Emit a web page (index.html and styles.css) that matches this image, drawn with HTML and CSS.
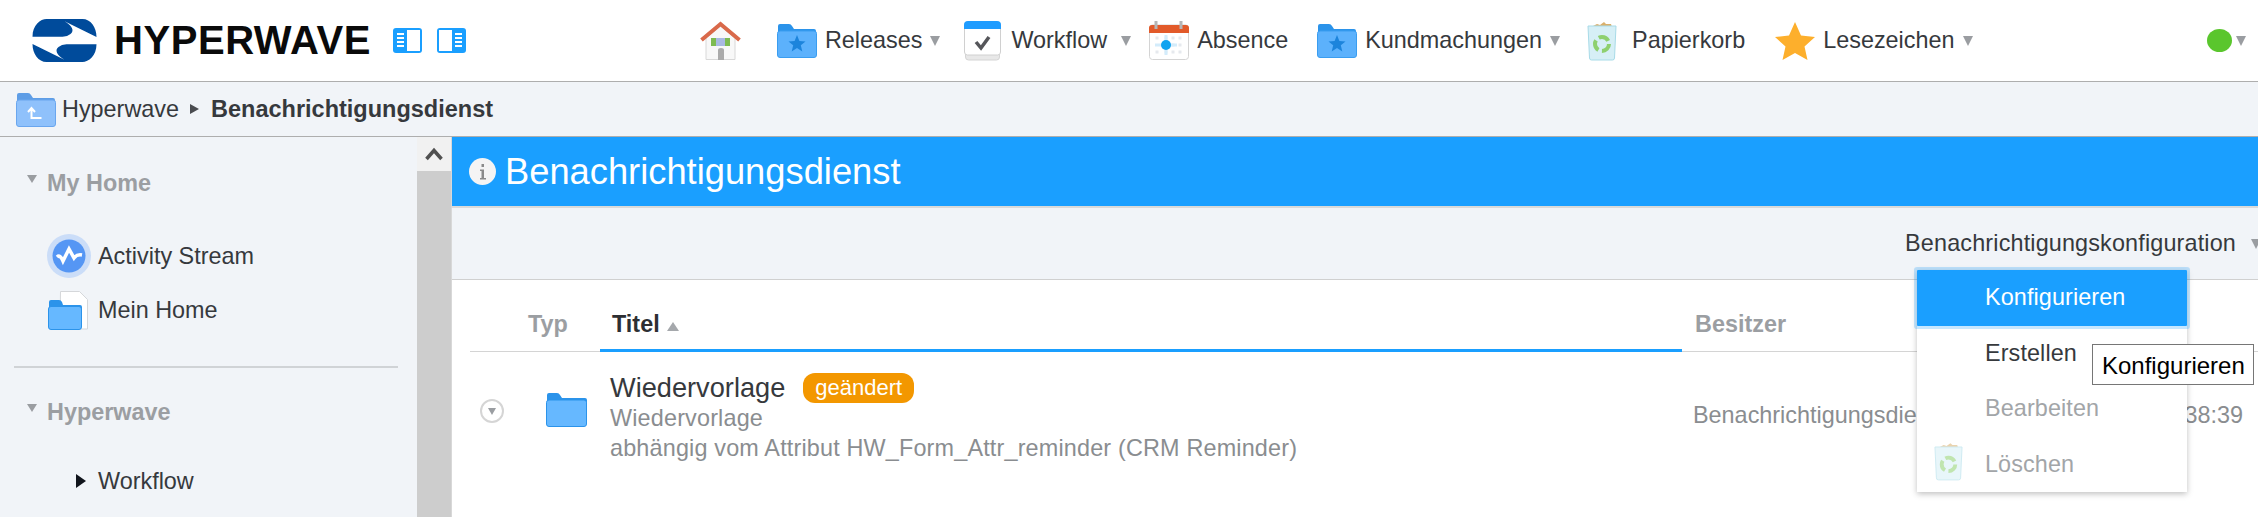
FILE: index.html
```html
<!DOCTYPE html>
<html lang="en">
<head>
    <meta charset="UTF-8">
    <meta name="viewport" content="width=device-width, initial-scale=1.0">
    <title>Hyperwave - Benachrichtigungsdienst</title>
    <link rel="stylesheet" href="styles.css">
</head>
<body>

    <svg class="defs" width="0" height="0">
        <symbol id="folder-star" viewBox="0 0 40 35">
            <path d="M1 7V3q0-2 2-2h9q2 0 3 2l2 3h20q2 0 2 2v4H1z" fill="#2b93ea"/>
            <rect x="0.5" y="8" width="39" height="26.5" rx="2.5" fill="#5cb1fc" stroke="#3a9df0"/>
            <polygon points="20,12 22.4,18 28.5,18.4 23.8,22.3 25.3,28.5 20,25.1 14.7,28.5 16.2,22.3 11.5,18.4 17.6,18" fill="#1c84dc"/>
        </symbol>
        <symbol id="folder-plain" viewBox="0 0 41 35">
            <path d="M1 7V3q0-2 2-2h8q2 0 3 2l2 3h23q2 0 2 2v4H1z" fill="#2b93ea"/>
            <rect x="0.5" y="8" width="40" height="26.5" rx="2.5" fill="#66b8ff" stroke="#2b93ea"/>
        </symbol>
        <symbol id="recycle" viewBox="0 0 30 40">
            <path d="M6 5l4-2 3 1 4-3 2 2 5 0 1 3H6z" fill="#d9b06c"/>
            <path d="M1 5h28l-1.500 32q0 2-2 2h-21q-2 0-2-2z" fill="#d6eff6" stroke="#a8dbe8"/>
            <circle cx="15" cy="23" r="7" fill="none" stroke="#8ed06f" stroke-width="4" stroke-dasharray="11 3.700"/>
        </symbol>
    </svg>

    <header class="topbar">
        <svg class="logo" width="65" height="43" viewBox="0 0 64 43">
            <path d="M0 17.700C0 6 8 0 14 0H50C58 0 64 8 64 18L32 2.300C40 7 42 12 38 15Q35 17.700 30 17.700Z" fill="#004b9b"/>
            <path d="M64 25.300C64 37 56 43 50 43H14C6 43 0 35 0 25L32 40.700C24 36 22 31 26 28Q29 25.300 34 25.300Z" fill="#004b9b"/>
        </svg>
        <span class="brand">HYPERWAVE</span>
        <svg class="panel-icon panel-left" width="29" height="25" viewBox="0 0 29 25">
            <rect width="29" height="25" rx="3" fill="#1a9fff"/>
            <rect x="14" y="2" width="13" height="21" fill="#fff"/>
            <path d="M4 6h7M4 10h7M4 14h7M4 18h7" stroke="#fff" stroke-width="2"/>
        </svg>
        <svg class="panel-icon panel-right" width="29" height="25" viewBox="0 0 29 25">
            <rect width="29" height="25" rx="3" fill="#1a9fff"/>
            <rect x="2" y="2" width="13" height="21" fill="#fff"/>
            <path d="M18 6h7M18 10h7M18 14h7M18 18h7" stroke="#fff" stroke-width="2"/>
        </svg>

        <nav class="nav">
            <a class="nav-item nav-home">
                <svg width="43" height="39" viewBox="0 0 43 39">
                    <path d="M7 17L21.500 5 36 17V38.500H7z" fill="#f8f8f8" stroke="#d8d8d8"/>
                    <path d="M2.500 19L21.500 3 40.500 19" fill="none" stroke="#d9694a" stroke-width="4"/>
                    <rect x="12" y="17" width="19" height="8" fill="#7dbb52"/>
                    <rect x="17" y="17" width="9" height="8" fill="#a9b9e2"/>
                    <path d="M19 39V29q0-2 3-2t3 2v10z" fill="#aaa"/>
                </svg>
            </a>
            <a class="nav-item nav-releases">
                <svg width="40" height="35"><use href="#folder-star"/></svg>
                <span>Releases</span><i class="caret"></i>
            </a>
            <a class="nav-item nav-workflow">
                <svg width="37" height="40" viewBox="0 0 37 40">
                    <rect x="1.500" y="6" width="34" height="33" rx="3" fill="#e8e8e8" stroke="#d4d4d4"/>
                    <rect x="0.500" y="1" width="36" height="33" rx="3" fill="#fff" stroke="#d0d0d0"/>
                    <path d="M0 4q0-4 4-4h29q4 0 4 4v4H0z" fill="#1f9cff"/>
                    <path d="M12 21l5 6 8-11" fill="none" stroke="#55565a" stroke-width="3.500"/>
                </svg>
                <span>Workflow</span><i class="caret"></i>
            </a>
            <a class="nav-item nav-absence">
                <svg width="40" height="39" viewBox="0 0 40 39">
                    <rect x="0.500" y="4" width="39" height="34.500" rx="3" fill="#fff" stroke="#d4d4d4"/>
                    <path d="M0 7q0-3 3-3h34q3 0 3 3v5H0z" fill="#e25a2a"/>
                    <path d="M7 0v8M32 0v8" stroke="#b5b5b5" stroke-width="3"/>
                    <path d="M6.500 17h3M15.500 17h3M22.500 17h3M29.500 17h3M22.500 24h3M29.500 24h3M6.500 31h3M15.500 31h3M22.500 31h3M29.500 31h3" stroke="#e6e9ee" stroke-width="3"/>
                    <path d="M6 24h22M17 14v20" stroke="#d3ecfb" stroke-width="3"/>
                    <circle cx="17" cy="24" r="5" fill="#0fa3f0"/>
                </svg>
                <span>Absence</span>
            </a>
            <a class="nav-item nav-notices">
                <svg width="40" height="35"><use href="#folder-star"/></svg>
                <span>Kundmachungen</span><i class="caret"></i>
            </a>
            <a class="nav-item nav-trash">
                <svg width="30" height="40"><use href="#recycle"/></svg>
                <span>Papierkorb</span>
            </a>
            <a class="nav-item nav-bookmarks">
                <svg width="40" height="38" viewBox="0 0 40 38">
                    <polygon points="20,0 26,13.500 40,15 29.500,24.500 32.500,38 20,31 7.500,38 10.500,24.500 0,15 14,13.500" fill="#fdaf2c"/>
                </svg>
                <span>Lesezeichen</span><i class="caret"></i>
            </a>
            <a class="nav-item nav-status">
                <i class="status-dot"></i><i class="caret"></i>
            </a>
        </nav>
    </header>

    <div class="crumbs">
        <svg width="40" height="35" viewBox="0 0 40 35">
            <path d="M1 7V3q0-2 2-2h9q2 0 3 2l2 3h20q2 0 2 2v4H1z" fill="#5e9de6"/>
            <rect x="0.500" y="8" width="39" height="26.500" rx="2.500" fill="#8fc1fb" stroke="#6aa6ee"/>
            <path d="M12 20l3.500-4 3.500 4M15.500 16v10h10" fill="none" stroke="#fff" stroke-width="2"/>
        </svg>
        <span class="crumb">Hyperwave</span>
        <i class="crumb-sep"></i>
        <strong class="crumb-current">Benachrichtigungsdienst</strong>
    </div>

    <div class="content">
        <aside class="sidebar">
            <h3 class="side-title"><i class="caret"></i>My Home</h3>
            <ul class="side-list">
                <li>
                    <span class="side-icon">
                        <svg width="44" height="44" viewBox="0 0 44 44">
                            <circle cx="22" cy="22" r="22" fill="#cbddf8"/>
                            <circle cx="22" cy="22" r="16.500" fill="#5596f4"/>
                            <path d="M10 23Q13 20 16 27L22 15 27 24Q30 20 35 21" fill="none" stroke="#fff" stroke-width="3.500"/>
                        </svg>
                    </span>
                    Activity Stream
                </li>
                <li>
                    <span class="side-icon">
                        <svg width="42" height="39" viewBox="0 0 42 39">
                            <path d="M13.500 .5h19l8 8v29.500h-27.500z" fill="#fff" stroke="#d5d7da"/>
                            <path d="M2 18v-7q0-2 2-2h8q2 0 3 2l1 3h17q2 0 2 2v2H2z" fill="#2b93ea"/>
                            <rect x="1.500" y="15.500" width="33" height="23" rx="2.500" fill="#66b8ff" stroke="#2b93ea"/>
                        </svg>
                    </span>
                    Mein Home
                </li>
            </ul>
            <div class="side-divider"></div>
            <h3 class="side-title"><i class="caret"></i>Hyperwave</h3>
            <ul class="side-list side-list-tree">
                <li><span class="side-icon"><i class="tree-arrow"></i></span>Workflow</li>
            </ul>
        </aside>

        <div class="scrollbar">
            <div class="scroll-btn">
                <svg width="18" height="14" viewBox="0 0 18 14"><path d="M1.500 12L9 3.500 16.500 12" fill="none" stroke="#505050" stroke-width="3.500"/></svg>
            </div>
        </div>

        <main class="main">
            <div class="title-bar">
                <svg width="27" height="27" viewBox="0 0 27 27">
                    <circle cx="13.500" cy="13.500" r="13.500" fill="#f4f4f4"/>
                    <path d="M11 11.500h4V20h2v1.500h-6V20h1.500v-7H11zM12.500 6h2.500v3h-2.500z" fill="#8a8a8a"/>
                </svg>
                <h1>Benachrichtigungsdienst</h1>
            </div>
            <div class="toolbar">
                <span>Benachrichtigungskonfiguration</span><i class="caret"></i>
            </div>

            <div class="table-head">
                <div class="col-type">Typ</div>
                <div class="col-title">Titel<i class="sort-up"></i></div>
                <div class="col-owner">Besitzer</div>
            </div>
            <div class="table-row">
                <div class="col-type">
                    <svg class="row-toggle" width="24" height="24" viewBox="0 0 24 24">
                        <circle cx="12" cy="12" r="11" fill="#fff" stroke="#d5d5d5" stroke-width="2"/>
                        <polygon points="8,9 16,9 12,16" fill="#9a9da1"/>
                    </svg>
                    <svg class="row-folder" width="41" height="35"><use href="#folder-plain"/></svg>
                </div>
                <div class="col-title">
                    <div class="row-name">Wiedervorlage <span class="badge">geändert</span></div>
                    <div class="row-sub">Wiedervorlage</div>
                    <div class="row-sub">abhängig vom Attribut HW_Form_Attr_reminder (CRM Reminder)</div>
                </div>
                <div class="col-owner">
                    <span>Benachrichtigungsdienst</span>
                    <span>38:39</span>
                </div>
            </div>

            <div class="menu">
                <div class="menu-item menu-active"><span class="menu-slot"></span>Konfigurieren</div>
                <div class="menu-item"><span class="menu-slot"></span>Erstellen</div>
                <div class="menu-item menu-disabled"><span class="menu-slot"></span>Bearbeiten</div>
                <div class="menu-item menu-disabled">
                    <span class="menu-slot"><svg width="29" height="39"><use href="#recycle"/></svg></span>Löschen
                </div>
            </div>
            <div class="tooltip">Konfigurieren</div>
        </main>
    </div>

</body>
</html>
```

FILE: styles.css
```css
/* Global Styles */
* {
    box-sizing: border-box;
}

body {
    font-family: "Liberation Sans", Arial, sans-serif;
    font-size: 23.4px;
    color: #36393d;
    margin: 0;
    width: 100vw;
    height: 100vh;
    display: flex;
    flex-direction: column;
    overflow: hidden;
    background-color: #fff;
}

.defs {
    position: absolute;
}

.caret {
    display: block;
    flex-shrink: 0;
    width: 0;
    height: 0;
    border-left: 5.5px solid transparent;
    border-right: 5.5px solid transparent;
    border-top: 10px solid #9a9da1;
}

/* Top Bar */
.topbar {
    height: 82px;
    flex-shrink: 0;
    display: flex;
    align-items: center;
    padding-left: 32px;
    border-bottom: 1px solid #aeaeae;
}

.logo {
    flex-shrink: 0;
}

.brand {
    margin-left: 17px;
    font-size: 40px;
    font-weight: bold;
    letter-spacing: 0.55px;
    color: #0a0a0a;
}

.panel-left { margin-left: 22px; }
.panel-right { margin-left: 15px; }

.nav {
    display: flex;
    align-items: center;
    margin-left: 233px;
}

.nav-item {
    display: flex;
    align-items: center;
    gap: 8px;
    white-space: nowrap;
}

.nav-releases { margin-left: 35px; }
.nav-workflow { margin-left: 24px; gap: 10px; }
.nav-workflow .caret { margin-left: 4px; }
.nav-absence { margin-left: 18px; }
.nav-notices { margin-left: 29px; }
.nav-trash { margin-left: 27px; gap: 15px; }
.nav-bookmarks { margin-left: 30px; }
.nav-status { margin-left: 234px; gap: 4px; }

.status-dot {
    display: block;
    width: 25px;
    height: 23px;
    border-radius: 50%;
    background-color: #5ac62d;
}

/* Breadcrumb */
.crumbs {
    height: 55px;
    flex-shrink: 0;
    display: flex;
    align-items: center;
    padding-left: 16px;
    background-color: #f1f4f8;
    border-bottom: 1px solid #aeaeae;
}

.crumb {
    margin-left: 6px;
}

.crumb-sep {
    margin: 0 12px 0 11px;
    border-top: 5.5px solid transparent;
    border-bottom: 5.5px solid transparent;
    border-left: 9px solid #4a4c50;
}

.crumb-current {
    font-size: 23.5px;
}

/* Content */
.content {
    flex: 1;
    display: flex;
    min-height: 0;
}

/* Sidebar */
.sidebar {
    width: 417px;
    flex-shrink: 0;
    padding-top: 32px;
    background-color: #f1f4f8;
}

.side-title {
    display: flex;
    align-items: center;
    gap: 10px;
    margin: 0 0 0 27px;
    height: 28px;
    font-size: 23.4px;
    color: #9b9ea2;
}

.side-title .caret {
    margin-top: -8px;
    border-top-width: 8px;
}

.side-list {
    list-style: none;
    margin: 32px 0 0;
    padding: 0 0 0 47px;
}

.side-list-tree {
    margin-top: 28px;
}

.side-list li {
    height: 54px;
    display: flex;
    align-items: center;
    gap: 7px;
}

.side-icon {
    width: 44px;
    display: flex;
    justify-content: flex-start;
}

.tree-arrow {
    margin-left: auto;
    margin-right: 5px;
    border-top: 7px solid transparent;
    border-bottom: 7px solid transparent;
    border-left: 10px solid #10141c;
}

.side-divider {
    height: 2px;
    margin: 29px 19px 30px 14px;
    background-color: #d0d3d6;
}

/* Scrollbar */
.scrollbar {
    width: 34px;
    flex-shrink: 0;
    background-color: #cdcdcd;
}

.scroll-btn {
    height: 34px;
    display: flex;
    align-items: center;
    justify-content: center;
    background-color: #f1f1f1;
}

/* Main */
.main {
    flex: 1;
    position: relative;
    overflow: hidden;
    border-left: 1px solid #d8d8d8;
}

.title-bar {
    height: 69px;
    display: flex;
    align-items: center;
    gap: 9px;
    padding-left: 17px;
    background-color: #1a9fff;
}

.title-bar h1 {
    margin: 0;
    font-size: 36.3px;
    font-weight: normal;
    color: #fff;
}

.toolbar {
    height: 74px;
    display: flex;
    align-items: center;
    justify-content: flex-end;
    gap: 15px;
    margin-right: -3px;
    letter-spacing: 0.15px;
    background-color: #f1f4f8;
    border-top: 2px solid #dadada;
    border-bottom: 1px solid #d0d0d0;
}

/* Table */
.table-head {
    height: 72px;
    display: flex;
    margin-left: 18px;
    font-weight: bold;
}

.table-head > div {
    display: flex;
    align-items: flex-end;
    padding-bottom: 13px;
    border-bottom: 1px solid #d4d4d4;
}

.table-head .col-type {
    width: 130px;
    padding-left: 58px;
    color: #9b9ea2;
}

.table-head .col-title {
    width: 1082px;
    padding-left: 12px;
    color: #2d2f33;
    border-bottom: 3px solid #1a9fff;
    padding-bottom: 11px;
}

.table-head .col-owner {
    flex: 1;
    padding-left: 13px;
    color: #9b9ea2;
}

.sort-up {
    align-self: flex-end;
    margin: 0 0 7px 7px;
    border-left: 6px solid transparent;
    border-right: 6px solid transparent;
    border-bottom: 9px solid #a5a8ac;
}

.table-row {
    display: flex;
    margin-left: 18px;
    padding-top: 19px;
}

.table-row .col-type {
    width: 130px;
    height: 80px;
    display: flex;
    align-items: center;
    padding-left: 10px;
}

.row-folder {
    margin-left: 42px;
    margin-top: -3px;
}

.table-row .col-title {
    width: 1082px;
    padding-left: 10px;
}

.row-name {
    display: flex;
    align-items: center;
    gap: 18px;
    height: 33px;
    font-size: 27.2px;
}

.badge {
    height: 30px;
    padding: 0 12px;
    border-radius: 12px;
    font-size: 22px;
    line-height: 29px;
    color: #fff;
    background-color: #f39700;
}

.row-sub {
    height: 29.5px;
    line-height: 29.5px;
    letter-spacing: 0.17px;
    color: #8a8d90;
}

.table-row .col-owner {
    flex: 1;
    display: flex;
    justify-content: space-between;
    padding: 29px 15px 0 11px;
    line-height: 30px;
    color: #8a8d90;
}

/* Dropdown Menu */
.menu {
    position: absolute;
    top: 133px;
    left: 1465px;
    width: 270px;
    letter-spacing: 0.1px;
    background-color: #fff;
    box-shadow: 0 2px 6px rgba(0, 0, 0, 0.25);
}

.menu-item {
    height: 55.5px;
    display: flex;
    align-items: center;
}

.menu-slot {
    width: 68px;
    padding-left: 17px;
    display: flex;
    flex-shrink: 0;
}

.menu-active {
    color: #fff;
    background-color: #1a9fff;
    box-shadow: 0 0 0 3px rgba(26, 159, 255, 0.25);
    border-radius: 1px;
}

.menu-disabled {
    color: #a2a5a8;
}

.menu-slot svg {
    opacity: 0.55;
    margin-top: -6px;
}

/* Tooltip */
.tooltip {
    position: absolute;
    top: 207px;
    left: 1640px;
    width: 162px;
    height: 41px;
    padding-left: 9px;
    font-size: 24px;
    line-height: 41px;
    white-space: nowrap;
    color: #000;
    background-color: #fff;
    border: 1px solid #767676;
}
```
